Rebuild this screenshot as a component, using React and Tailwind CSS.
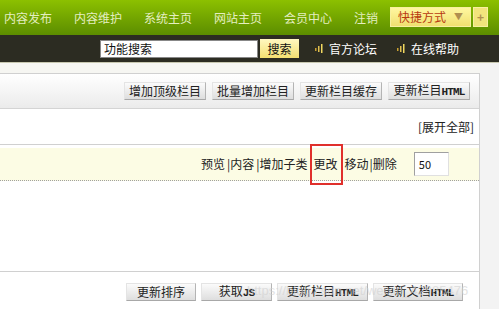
import React from "react";

const NAV = ["内容发布", "内容维护", "系统主页", "网站主页", "会员中心", "注销"];
const TOP_BTNS = [
    { label: "增加顶级栏目", w: "w-[82px]" },
    { label: "批量增加栏目", w: "w-[82px]" },
    { label: "更新栏目缓存", w: "w-[82px]" },
    { label: "更新栏目", tail: "HTML", w: "w-[82px]" },
];
const BOTTOM_BTNS = [
    { label: "更新排序", w: "w-[70px]" },
    { label: "获取", tail: "JS", w: "w-[71px]" },
    { label: "更新栏目", tail: "HTML", w: "w-[91px]" },
    { label: "更新文档", tail: "HTML", w: "w-[90px]" },
];

function Btn({ label, tail, w }) {
    return (
        <button
            className={`${w} h-[18px] flex items-center justify-center whitespace-nowrap text-[12px] leading-none text-[#222] border border-[#e4e4e4] border-r-[#b4b4b4] border-b-[#a8a8a8] bg-gradient-to-b from-[#fbfbfb] to-[#dedede]`}
        >
            <span className="leading-[14px]">
                {label}
                {tail && (
                    <span className="text-[11px] font-bold tracking-[-0.8px]" style={{ fontFamily: '"Liberation Mono", monospace' }}>
                        {tail}
                    </span>
                )}
            </span>
        </button>
    );
}

function Bars() {
    return (
        <svg width="8" height="10" viewBox="0 0 8 10" className="shrink-0">
            <rect x="0" y="4" width="1.5" height="3" fill="#c8a030" />
            <rect x="3" y="2" width="1.5" height="6" fill="#e0c050" />
            <rect x="6" y="0" width="1.5" height="9" fill="#f0d860" />
        </svg>
    );
}

export default function App() {
    return (
        <div
            className="relative w-[499px] h-[309px] overflow-hidden bg-[#f3f3f1] text-[12px]"
            style={{ fontFamily: '"Noto Sans CJK SC", "Liberation Sans", sans-serif' }}
        >
            {/* Top nav */}
            <div className="h-[35px] flex items-center bg-gradient-to-b from-[#8cc000] to-[#5c8d00]">
                <div className="flex items-center pl-[4px] gap-[22px] text-[#e4eec0] leading-none">
                    {NAV.map((n) => (
                        <span key={n}>{n}</span>
                    ))}
                </div>
                <div className="ml-[12px] flex items-center gap-[2px] mt-[-2px]">
                    <div className="w-[81px] h-[20px] flex items-center pl-[7px] bg-gradient-to-b from-[#fff7a0] to-[#f0e070] border border-[#f8f0a0] text-[#b83a10] leading-none">
                        快捷方式
                        <span className="ml-[8px] text-[9px] text-[#b09050]">▼</span>
                    </div>
                    <div className="w-[15px] h-[20px] flex items-center justify-center bg-[#f2e47c] border border-[#f8f0a0] text-[#b09050] font-bold leading-none">
                        +
                    </div>
                </div>
            </div>

            {/* Search bar */}
            <div className="h-[28px] flex items-center bg-[#2c2c22] border-b border-[#c8c8b0]">
                <div className="ml-[100px] w-[158px] h-[18px] bg-white border border-[#888] flex items-center pl-[3px] text-[#111] leading-none">
                    功能搜索
                </div>
                <div className="ml-[2px] w-[39px] h-[19px] flex items-center justify-center bg-gradient-to-b from-[#fff8c0] to-[#f4e070] text-[#111] leading-none">
                    搜索
                </div>
                <div className="ml-[16px] flex items-center gap-[6px] text-white leading-none">
                    <Bars />
                    <span>官方论坛</span>
                </div>
                <div className="ml-[20px] flex items-center gap-[6px] text-white leading-none">
                    <Bars />
                    <span>在线帮助</span>
                </div>
            </div>

            {/* Body */}
            <div className="flex">
                <div className="w-[480px] flex flex-col">
                    <div className="h-[10px] bg-[#f6f6f2]" />
                    <div className="h-[236px] bg-white border-t border-r border-[#d0d0d0] flex flex-col">
                        {/* toolbar */}
                        <div className="h-[35px] shrink-0 flex items-center justify-end gap-[6px] pr-[9px] bg-gradient-to-b from-white to-[#ebebeb] border-b border-[#d4d4d4]">
                            {TOP_BTNS.map((b) => (
                                <Btn key={b.w + b.label} {...b} />
                            ))}
                        </div>
                        <div className="h-[36px] shrink-0 flex items-center justify-end pr-[5px] border-b border-[#d0d0d0] text-[#222] leading-none">
                            [展开全部]
                        </div>
                        <div className="h-[3px] shrink-0" />
                        {/* row */}
                        <div className="h-[33px] shrink-0 flex items-center bg-[#fcfce4] border-b border-dotted border-[#a0a0a0] text-[#222] leading-none">
                            <div className="ml-[201px] flex items-center">
                                <span>预览</span>
                                <span className="ml-[2px]">|内容</span>
                                <span className="ml-[2px]">|增加子类</span>
                                <span className="ml-[6px]">更改</span>
                                <span className="ml-[7px]">移动</span>
                                <span className="ml-[1px]">|删除</span>
                            </div>
                            <div className="ml-[17px] w-[35px] h-[24px] bg-white border border-[#a0a0a0] border-r-[#e0e0e0] border-b-[#e0e0e0] flex items-center pl-[4px] text-[11px] text-[#111]">
                                50
                            </div>
                        </div>
                        <div className="flex-1 border-b border-[#d0d0d0]" />
                        <div className="h-[37px] shrink-0 flex items-start pt-[11px] justify-end gap-[5px] pr-[16px]">
                            {BOTTOM_BTNS.map((b) => (
                                <Btn key={b.w + b.label} {...b} />
                            ))}
                        </div>
                    </div>
                </div>
                <div className="flex-1 bg-[#f3f3f3]" />
            </div>

            {/* red highlight */}
            <div className="absolute left-[310px] top-[144px] w-[33px] h-[41px] border-2 border-[#e0302c]" />

            {/* watermark */}
            <div
                className="absolute left-[247px] top-[284px] text-[13px] text-[#d0d0d0] opacity-60 leading-none pointer-events-none"
                style={{ fontFamily: '"Liberation Sans", sans-serif' }}
            >
                https://blog.csdn.net/weixin_42985476
            </div>
        </div>
    );
}
